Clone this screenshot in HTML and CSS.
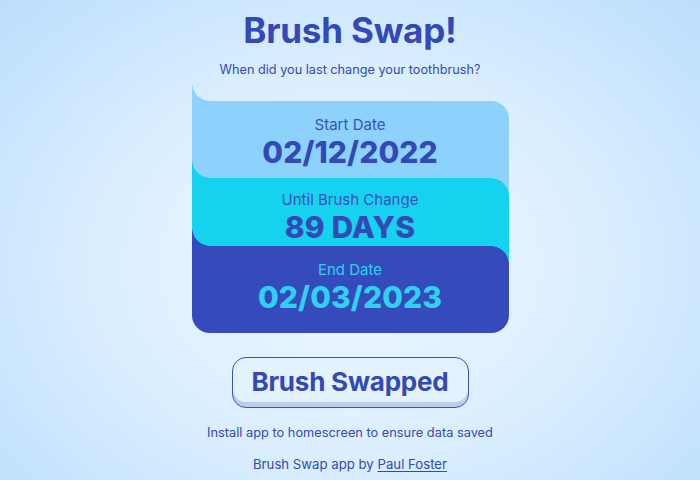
FILE: index.html
```html
<!DOCTYPE html>
<html lang="en">
<head>
<meta charset="utf-8">
<title>Brush Swap!</title>
<link rel="stylesheet" href="styles.css">
</head>
<body>
<main class="app">
  <h1 class="title">Brush Swap!</h1>
  <p class="subtitle">When did you last change your toothbrush?</p>
  <section class="card">
    <div class="strip"></div>
    <div class="band band-light">
      <div class="label">Start Date</div>
      <div class="value">02/12/2022</div>
    </div>
    <div class="band band-cyan">
      <div class="label">Until Brush Change</div>
      <div class="value">89 DAYS</div>
    </div>
    <div class="band band-dark">
      <div class="label">End Date</div>
      <div class="value">02/03/2023</div>
    </div>
  </section>
  <button class="swap-btn" type="button">Brush Swapped</button>
  <p class="note">Install app to homescreen to ensure data saved</p>
  <p class="credit">Brush Swap app by <a href="#">Paul Foster</a></p>
</main>
</body>
</html>
```
FILE: styles.css
```css
:root {
  --light: #8dd2fd;
  --cyan: #15d2ef;
  --dark: #354bbb;
  --ink: #3449b6;
  --r: 18px;
}
* { box-sizing: border-box; }
html, body { height: 100%; }
body {
  margin: 0;
  font-family: Inter, "Noto Sans", sans-serif;
  color: var(--ink);
  background: radial-gradient(ellipse 75% 85% at 50% 55%, #eef7ff 0%, #dcefff 45%, #b7dbfc 100%);
  overflow: hidden;
}
.app {
  display: flex;
  flex-direction: column;
  align-items: center;
}
.title {
  margin: 9px 0 0;
  font-size: 35px;
  line-height: 42px;
  font-weight: 700;
  letter-spacing: -0.2px;
}
.subtitle {
  margin: 10px 0 0;
  font-size: 12.7px;
  line-height: 18px;
}
.card {
  margin-top: 4px;
  width: 317px;
  display: flex;
  flex-direction: column;
  text-align: center;
}
.strip {
  height: var(--r);
  background: radial-gradient(circle at 100% 0, transparent 17.5px, var(--light) 18px) left top / var(--r) var(--r) no-repeat;
}
.band { display: flex; flex-direction: column; align-items: center; }
.label { font-size: 15px; line-height: 18px; }
.value { font-size: 30px; line-height: 36px; font-weight: 800; letter-spacing: 0.1px; }
.band-light {
  height: 77px;
  padding-top: 15px;
  background-color: var(--light);
  border-top-right-radius: var(--r);
  background-image: radial-gradient(circle at 100% 0, var(--light) 17.5px, var(--cyan) 18px);
  background-position: left bottom;
  background-size: var(--r) var(--r);
  background-repeat: no-repeat;
}
.band-cyan {
  height: 68px;
  padding-top: 13px;
  background-color: var(--cyan);
  background-image:
    radial-gradient(circle at 0 100%, var(--cyan) 17.5px, var(--light) 18px),
    radial-gradient(circle at 100% 0, var(--cyan) 17.5px, var(--dark) 18px);
  background-position: right top, left bottom;
  background-size: var(--r) var(--r);
  background-repeat: no-repeat;
}
.band-dark {
  height: 87px;
  padding-top: 15px;
  background-color: var(--dark);
  color: #2fd0f2;
  border-radius: 0 0 var(--r) var(--r);
  background-image: radial-gradient(circle at 0 100%, var(--dark) 17.5px, var(--cyan) 18px);
  background-position: right top;
  background-size: var(--r) var(--r);
  background-repeat: no-repeat;
}
.band-cyan .label, .band-light .label { color: #3b50b9; }
.swap-btn {
  margin-top: 24px;
  width: 237px;
  height: 51px;
  border: 1.5px solid #3d52b8;
  border-radius: 14px;
  background: #e4f2fe;
  box-shadow: inset 0 -5px 0 #bccde9;
  font-family: inherit;
  font-size: 26px;
  font-weight: 700;
  letter-spacing: -0.2px;
  color: var(--ink);
  padding: 0 0 3px;
  cursor: pointer;
}
.note {
  margin: 16px 0 0;
  font-size: 12.8px;
  line-height: 18px;
}
.credit {
  margin: 13px 0 0;
  font-size: 13.2px;
  line-height: 18px;
}
.credit a { color: inherit; text-decoration: underline; text-underline-offset: 2px; }
```
